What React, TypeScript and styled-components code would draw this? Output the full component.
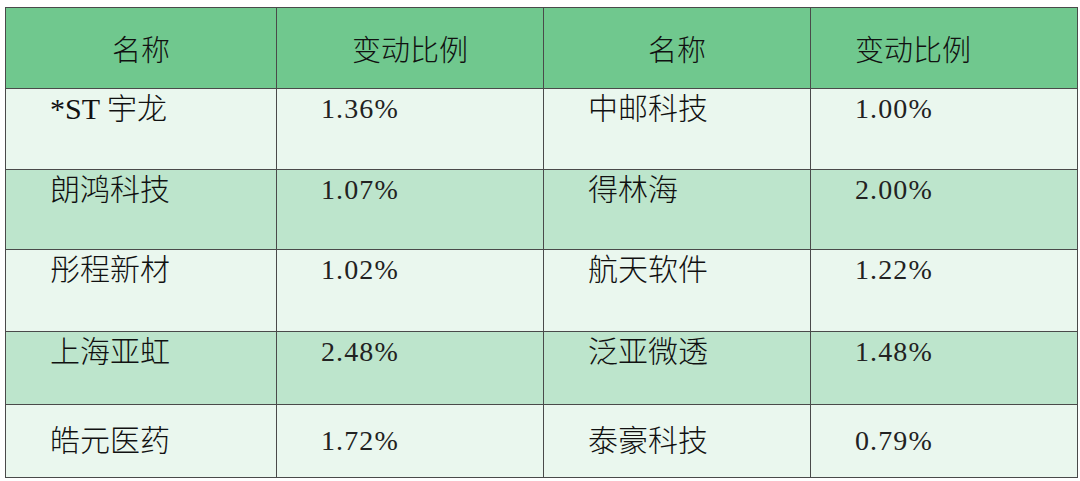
import React from 'react';
import styled, { createGlobalStyle } from 'styled-components';

const GlobalStyle = createGlobalStyle`
  html, body {
    margin: 0;
    padding: 0;
    background: #ffffff;
  }
`;

const rows = [
  { left: '*ST 宇龙', leftPct: '1.36%', right: '中邮科技', rightPct: '1.00%' },
  { left: '朗鸿科技', leftPct: '1.07%', right: '得林海', rightPct: '2.00%' },
  { left: '彤程新材', leftPct: '1.02%', right: '航天软件', rightPct: '1.22%' },
  { left: '上海亚虹', leftPct: '2.48%', right: '泛亚微透', rightPct: '1.48%' },
  { left: '皓元医药', leftPct: '1.72%', right: '泰豪科技', rightPct: '0.79%' },
];

const Page = styled.div`
  padding: 7px 3px 4px 5px;
  font-family: 'Liberation Serif', 'Noto Sans CJK SC', serif;
  color: #111111;
`;

const Grid = styled.div`
  display: grid;
  grid-template-columns: 270px 266px 266px 266px;
  grid-template-rows: 80px 80px 79px 81px 72px 72px;
  gap: 1px;
  padding: 1px;
  background: #4a4a4a;
  width: max-content;
`;

const HeadCell = styled.div<{ $left?: boolean }>`
  background: #70c88e;
  display: flex;
  align-items: center;
  justify-content: ${(p) => (p.$left ? 'flex-start' : 'center')};
  padding-left: ${(p) => (p.$left ? '44px' : '0')};
  font-size: 29px;
  font-weight: 300;
`;

const Cell = styled.div<{ $shade: boolean; $center: boolean }>`
  background: ${(p) => (p.$shade ? '#bde5cc' : '#eaf7ee')};
  display: flex;
  align-items: ${(p) => (p.$center ? 'center' : 'flex-start')};
  padding-left: 44px;
  font-size: 30px;
  font-weight: 300;
  line-height: 40px;
  white-space: nowrap;
`;

const Num = styled.span`
  font-size: 28px;
  letter-spacing: 1.1px;
  color: #222222;
`;

const headers = ['名称', '变动比例', '名称', '变动比例'];

export default function App() {
  return (
    <>
      <GlobalStyle />
      <Page>
        <Grid>
          {headers.map((h, i) => (
            <HeadCell key={i} $left={i === 3}>
              {h}
            </HeadCell>
          ))}
          {rows.map((r, i) => {
            const shade = i % 2 === 1;
            const center = i === rows.length - 1;
            return (
              <React.Fragment key={i}>
                <Cell $shade={shade} $center={center}>{r.left}</Cell>
                <Cell $shade={shade} $center={center}>
                  <Num>{r.leftPct}</Num>
                </Cell>
                <Cell $shade={shade} $center={center}>{r.right}</Cell>
                <Cell $shade={shade} $center={center}>
                  <Num>{r.rightPct}</Num>
                </Cell>
              </React.Fragment>
            );
          })}
        </Grid>
      </Page>
    </>
  );
}
